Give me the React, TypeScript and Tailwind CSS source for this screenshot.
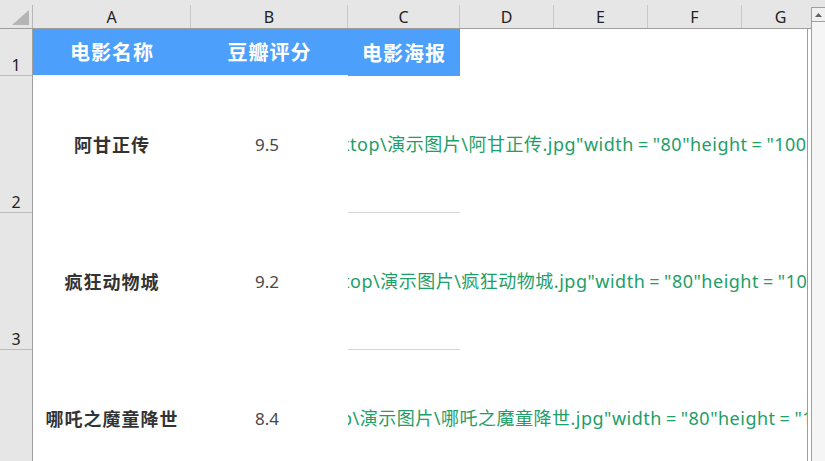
import React from "react";

const COLS = [
  { key: "A", w: "w-[158px]" },
  { key: "B", w: "w-[157px]" },
  { key: "C", w: "w-[112px]" },
  { key: "D", w: "w-[94px]" },
  { key: "E", w: "w-[94px]" },
  { key: "F", w: "w-[94px]" },
];

const ROWS = [
  { n: "2", name: "阿甘正传", score: "9.5", head: "ktop\\演示图片\\阿甘正传", shift: "ml-[-8px]" },
  { n: "3", name: "疯狂动物城", score: "9.2", head: "top\\演示图片\\疯狂动物城", shift: "ml-[-5px]" },
  { n: "", name: "哪吒之魔童降世", score: "8.4", head: "p\\演示图片\\哪吒之魔童降世", shift: "ml-[-7px]" },
];

function Poster({ head, shift }: { head: string; shift: string }) {
  return (
    <span className={shift}>
      {head}.jpg"width<span className="mx-[4px]">=</span>"80"height<span className="mx-[4px]">=</span>"100"&gt;
    </span>
  );
}

export default function App() {
  return (
    <div className="w-[825px] h-[461px] flex bg-white overflow-hidden font-['Noto_Sans','Noto_Sans_CJK_SC',sans-serif]">
      {/* sheet */}
      <div className="w-[811px] flex flex-col">
        {/* column headers */}
        <div className="h-[29px] flex bg-[#e6e6e6] border-b border-[#9e9e9e]">
          <div className="w-[33px] flex items-end">
            <div className="flex-1 flex items-end justify-end pr-[3px] pb-[3px]">
              <svg width="17" height="15" viewBox="0 0 17 15">
                <polygon points="17,0 17,15 0,15" fill="#b5b5b5" />
              </svg>
            </div>
            <div className="w-px h-[23px] bg-[#b8b8b8]" />
          </div>
          {COLS.map((c) => (
            <div key={c.key} className={`${c.w} flex items-end`}>
              <div className="flex-1 h-full flex items-center justify-center pt-[6px] text-[16px] text-[#222]">{c.key}</div>
              <div className="w-px h-[23px] bg-[#c8c8c8]" />
            </div>
          ))}
          <div className="flex-1 h-full flex items-center justify-center pt-[6px] pl-[8px] text-[16px] text-[#222]">G</div>
        </div>

        <div className="flex-1 flex">
          {/* row headers */}
          <div className="w-[33px] flex flex-col bg-[#e6e6e6] border-r border-[#9e9e9e]">
            <div className="h-[47px] shrink-0 flex items-end justify-center pb-[2px] leading-none border-b border-[#bdbdbd] text-[16px] text-[#222]">1</div>
            {ROWS.map((r, i) => (
              <div key={i} className="h-[137px] shrink-0 flex items-end justify-center pb-[2px] leading-none border-b border-[#bdbdbd] text-[16px] text-[#222]">{r.n}</div>
            ))}
          </div>

          {/* cells */}
          <div className="w-[775px] flex flex-col border-r border-[#9e9e9e]">
            <div className="h-[47px] shrink-0 flex">
              <div className="w-[158px] h-[46px] bg-[#4c9ffb] flex items-center justify-center text-white font-bold text-[20px] tracking-[1px] font-['Noto_Sans_CJK_SC',sans-serif]">电影名称</div>
              <div className="w-[157px] h-[46px] bg-[#4c9ffb] flex items-center justify-center text-white font-bold text-[20px] tracking-[1px] font-['Noto_Sans_CJK_SC',sans-serif]">豆瓣评分</div>
              <div className="w-[112px] h-[47px] bg-[#4c9ffb] flex items-center justify-center text-white font-bold text-[20px] tracking-[1px] font-['Noto_Sans_CJK_SC',sans-serif]">电影海报</div>
            </div>
            {ROWS.map((r, i) => (
              <div key={i} className="h-[137px] shrink-0 flex">
                <div className="w-[158px] flex items-center justify-center text-[18px] font-bold text-[#333] tracking-[1px] font-['Noto_Sans_CJK_SC',sans-serif]">{r.name}</div>
                <div className="w-[157px] flex items-center justify-center pr-[5px] text-[17px] text-[#484848]">{r.score}</div>
                <div className="flex-1 flex flex-col overflow-hidden">
                  <div className="flex-1 flex items-center whitespace-nowrap text-[18px] tracking-[0.5px] text-[#1e9e68]">
                    <Poster head={r.head} shift={r.shift} />
                  </div>
                  <div className="w-[112px] h-px bg-[#d4d4d4]" />
                </div>
              </div>
            ))}
          </div>
        </div>
      </div>

      {/* vertical scrollbar */}
      <div className="w-[14px] flex flex-col">
        <div className="h-[7px] bg-[#e6e6e6]" />
        <div className="flex-1 flex flex-col border-l border-t border-[#a0a0a0] bg-[#f5f5f5]">
          <div className="h-[14px] flex items-center justify-center border-b border-[#a0a0a0] bg-[#f0f0f0]">
            <svg width="7" height="4" viewBox="0 0 7 4">
              <polygon points="3.5,0 7,4 0,4" fill="#606060" />
            </svg>
          </div>
        </div>
      </div>
    </div>
  );
}
